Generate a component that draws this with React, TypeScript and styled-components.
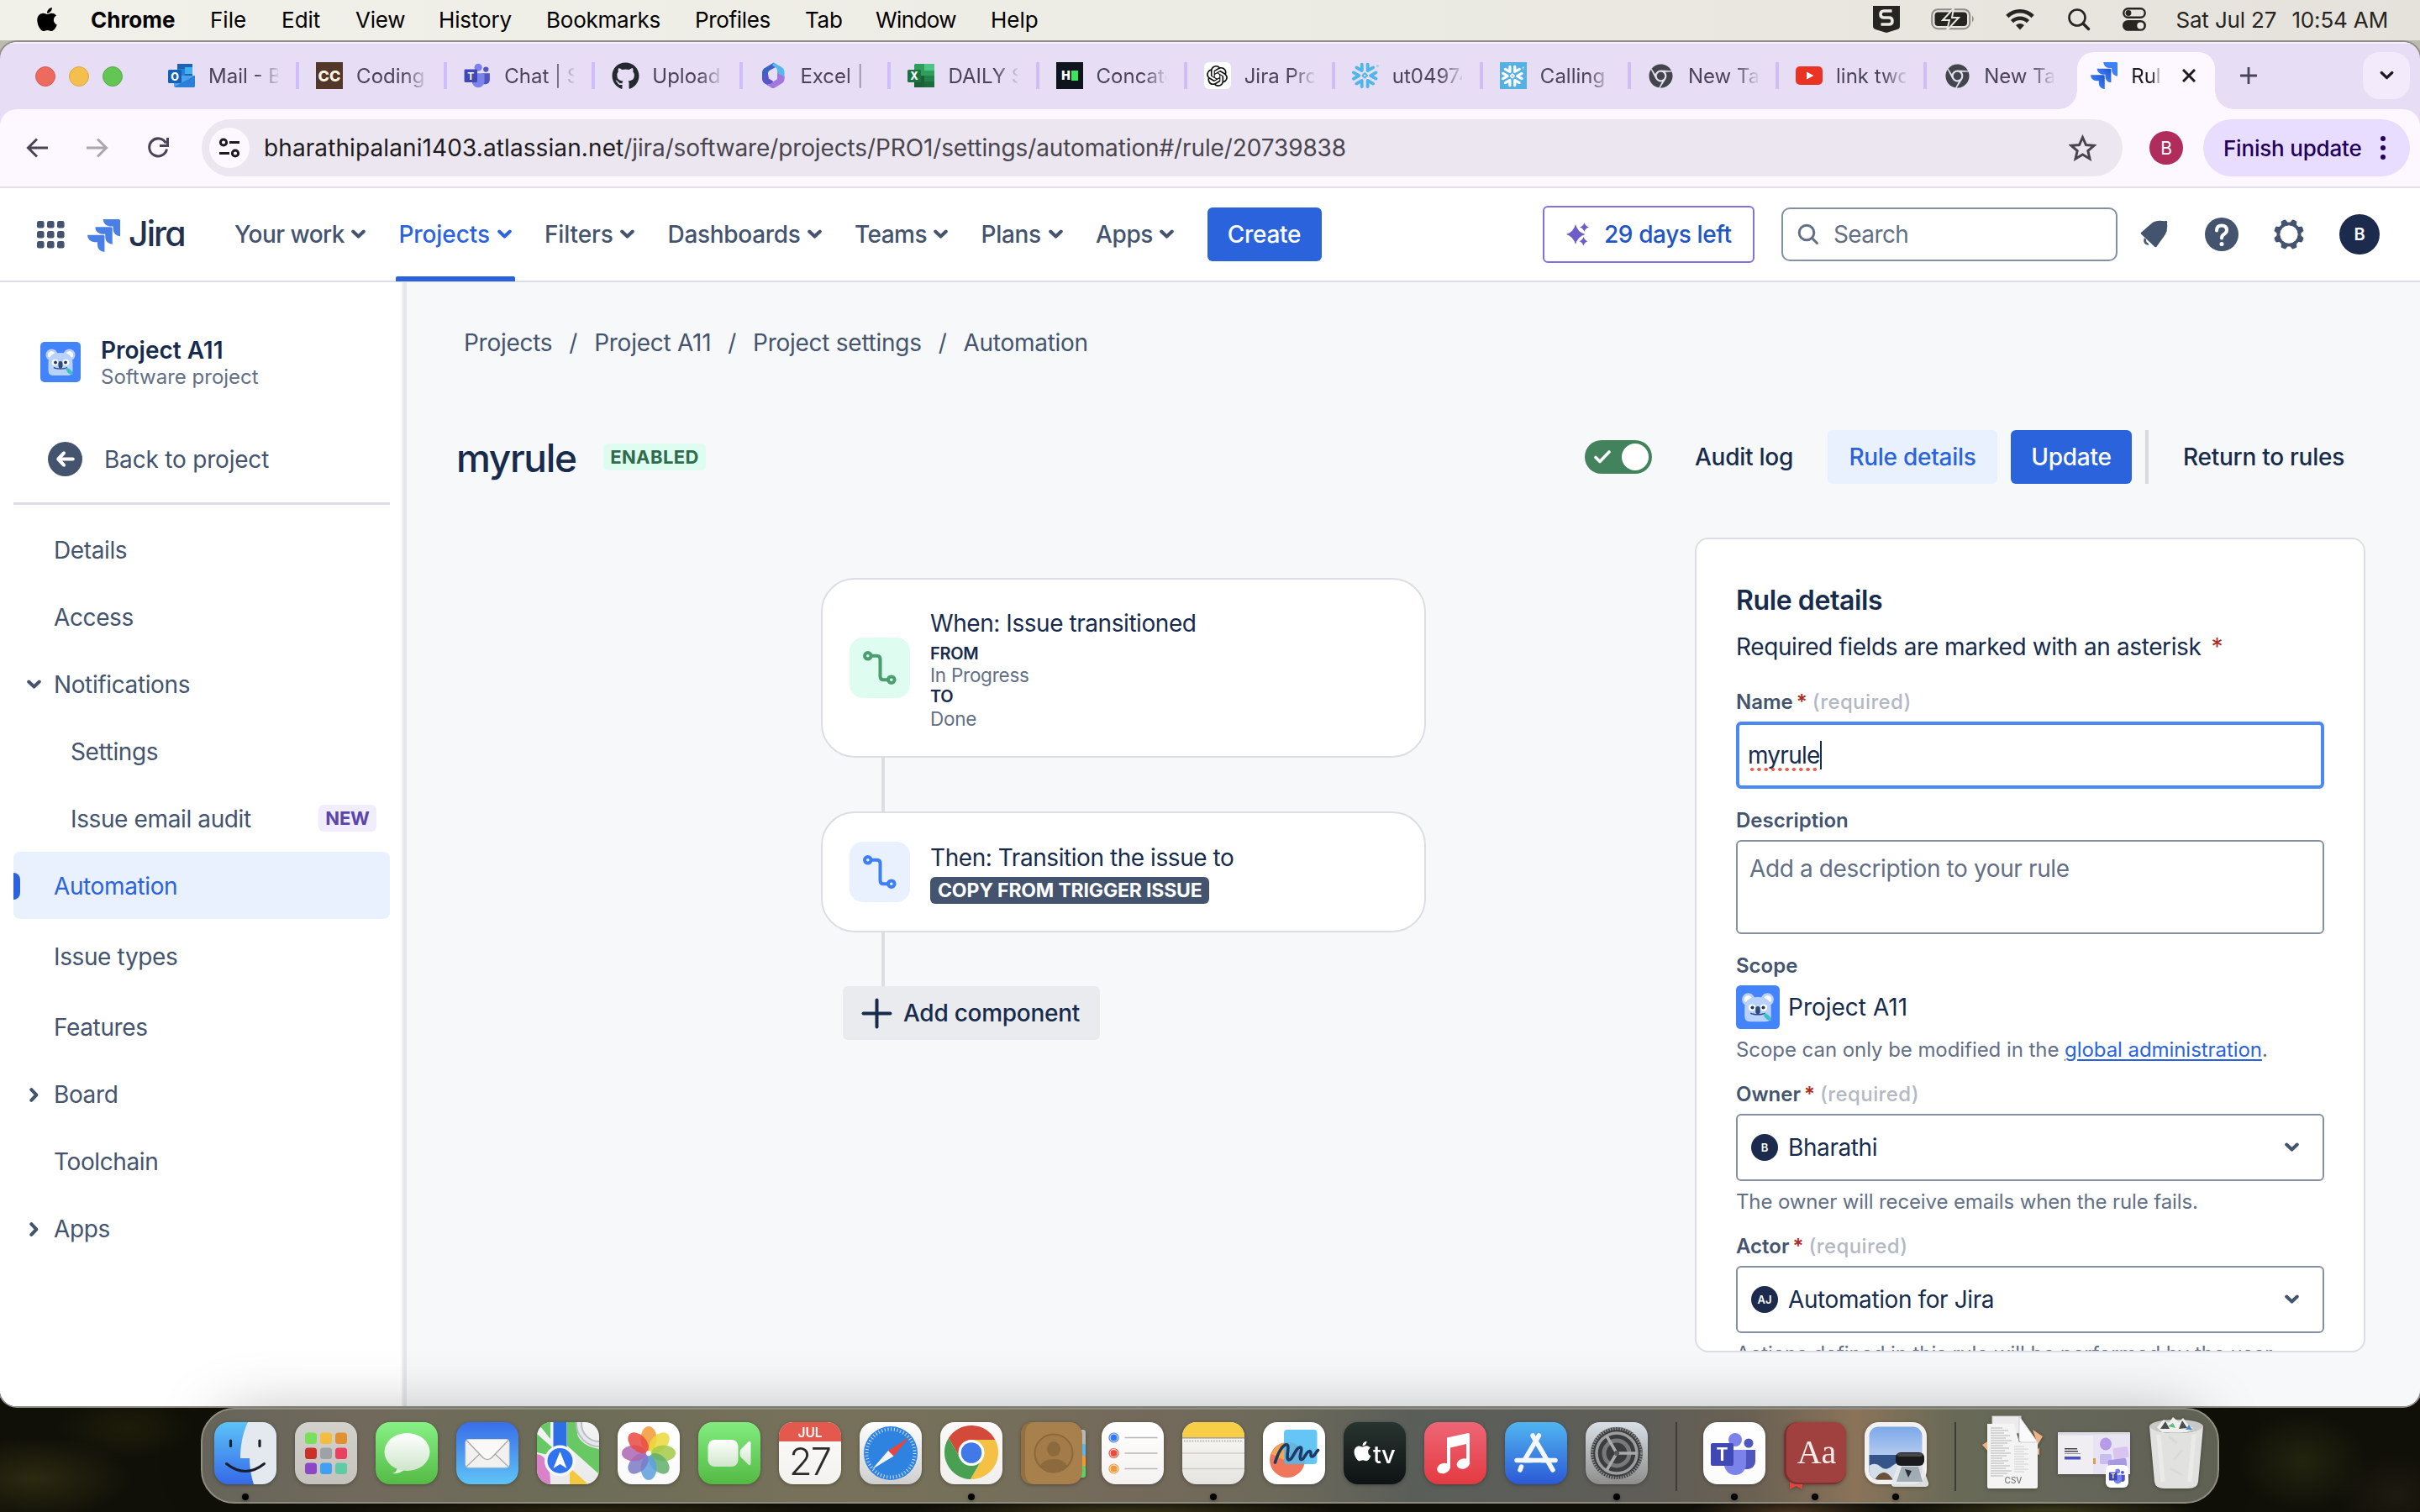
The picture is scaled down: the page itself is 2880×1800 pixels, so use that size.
import React from "react";
import styled, { createGlobalStyle, css } from "styled-components";
import { FaApple, FaChrome, FaGithub } from "react-icons/fa";
import { SiOpenai, SiSnowflake } from "react-icons/si";

const Global = createGlobalStyle`
  *, *::before, *::after { box-sizing: border-box; }
  body { margin: 0; width: 2880px; height: 1800px; overflow: hidden; }
  svg { display: block; flex: none; }
  body, input, button { font-family: Inter, "Liberation Sans", sans-serif; }
`;

const ink = "#172b4d";
const subtle = "#44546f";
const muted = "#626f86";
const blue = "#2a63dc";
const line = "#dcdee4";

/* ---------- desktop and menu bar ---------- */

const Desktop = styled.div`
  display: flex;
  flex-direction: column;
  width: 2880px;
  height: 1800px;
  overflow: hidden;
  background:
    radial-gradient(ellipse 120px 50px at 40px 1760px, #2c2a10 0%, transparent 100%),
    radial-gradient(ellipse 90px 40px at 150px 1700px, #1d1c09 0%, transparent 100%),
    radial-gradient(ellipse 300px 12px at 700px 1798px, #2a240f 0%, transparent 100%),
    radial-gradient(ellipse 260px 16px at 1340px 1800px, #3a3416 0%, transparent 100%),
    radial-gradient(ellipse 120px 20px at 2130px 1800px, #4a3520 0%, transparent 100%),
    radial-gradient(ellipse 180px 14px at 2440px 1798px, #3c3a18 0%, transparent 100%),
    radial-gradient(ellipse 80px 60px at 2740px 1740px, #22240f 0%, transparent 100%),
    radial-gradient(ellipse 70px 50px at 2850px 1780px, #1d1b10 0%, transparent 100%),
    linear-gradient(#bdbbae 0, #bdbbae 800px, #100f08 801px, #100f08 100%);
`;

const MenuBar = styled.header`
  display: flex;
  align-items: center;
  flex: none;
  height: 48px;
  padding: 0 38px 2px 40px;
  background: linear-gradient(90deg, #f1f0e9, #ecebe4 50%, #e4e2db);
  color: #000;
  font-size: 26px;
`;

const MenuItem = styled.span<{ $w: number; $ls?: number; $bold?: boolean }>`
  width: ${(p) => p.$w}px;
  margin-right: 42px;
  white-space: nowrap;
  letter-spacing: ${(p) => p.$ls ?? 0}px;
  font-weight: ${(p) => (p.$bold ? 700 : 400)};
`;

const AppleSlot = styled.span`
  display: flex;
  width: 68px;
`;

const StatusArea = styled.div`
  display: flex;
  align-items: center;
  margin-left: auto;
  color: #262522;
`;

const StatusSlot = styled.span<{ $w: number }>`
  display: flex;
  width: ${(p) => p.$w}px;
`;

const Clock = styled.span`
  display: flex;
  gap: 18px;
  white-space: pre;
  letter-spacing: -0.15px;
`;

/* ---------- browser window ---------- */

const BrowserWindow = styled.div`
  display: flex;
  flex-direction: column;
  flex: none;
  height: 1624px;
  margin-top: 2px;
  border-radius: 20px;
  overflow: hidden;
  background: #e7def6;
  box-shadow: 0 0 0 2px #8f8d86;
`;

const TabStrip = styled.div`
  display: flex;
  align-items: center;
  flex: none;
  height: 80px;
  box-shadow: inset 0 2px 0 #f4effb;
`;

const Lights = styled.div`
  display: flex;
  gap: 16px;
  width: 180px;
  padding: 2px 0 0 42px;
`;

const Light = styled.span<{ $c: string; $edge: string }>`
  width: 24px;
  height: 24px;
  border-radius: 50%;
  background: ${(p) => p.$c};
  border: 1px solid ${(p) => p.$edge};
`;

const Tab = styled.div`
  display: flex;
  align-items: center;
  gap: 16px;
  flex: none;
  width: 176.1px;
  height: 32px;
  padding-left: 20px;
  border-right: 4px solid #cfbcf8;
  color: #4a4458;
  font-size: 24px;
  &:nth-child(14) { border-right-color: transparent; }
`;

const TabTitle = styled.span<{ $w?: number }>`
  width: ${(p) => p.$w ?? 83}px;
  overflow: hidden;
  white-space: nowrap;
  mask-image: linear-gradient(90deg, #000 68%, transparent 104%);
`;

const FavSlot = styled.span`
  display: flex;
  align-items: center;
  justify-content: center;
  flex: none;
  width: 32px;
  height: 32px;
`;

const ActiveTab = styled.div`
  position: relative;
  display: flex;
  align-items: center;
  gap: 16px;
  align-self: flex-end;
  width: 164px;
  height: 68px;
  margin-left: 3px;
  padding: 0 0 12px 16px;
  border-radius: 20px 20px 0 0;
  background: #fdf7ff;
  color: #1d1b20;
  font-size: 24px;
  &::before, &::after {
    content: "";
    position: absolute;
    bottom: 0;
    width: 22px;
    height: 22px;
  }
  &::before { left: -22px; background: radial-gradient(circle at 0 0, transparent 21.5px, #fdf7ff 22px); }
  &::after { right: -22px; background: radial-gradient(circle at 100% 0, transparent 21.5px, #fdf7ff 22px); }
`;

const CloseSlot = styled.span`
  display: flex;
  margin-left: 9px;
`;

const NewTab = styled.span`
  display: flex;
  margin-left: 30px;
`;

const TabSearch = styled.span`
  display: flex;
  align-items: center;
  justify-content: center;
  width: 56px;
  height: 56px;
  margin: 0 12px 0 auto;
  border-radius: 20px;
  background: #f3ebfc;
`;

const AddressBar = styled.div`
  display: flex;
  align-items: center;
  flex: none;
  height: 94px;
  padding-left: 16px;
  border-bottom: 2px solid #e3dfea;
  border-radius: 20px 20px 0 0;
  background: #fdf7ff;
`;

const NavButton = styled.span`
  display: flex;
  align-items: center;
  justify-content: center;
  width: 56px;
  margin-right: 16px;
`;

const Omnibox = styled.div`
  display: flex;
  align-items: center;
  width: 2286px;
  height: 68px;
  margin-left: 8px;
  padding: 0 31px 0 9px;
  border-radius: 34px;
  background: #ece6f0;
  font-size: 28px;
  color: #49454f;
`;

const SiteInfo = styled.span`
  display: flex;
  align-items: center;
  justify-content: center;
  width: 48px;
  height: 48px;
  margin-right: 17px;
  border-radius: 50%;
  background: #fdf7ff;
`;

const UrlHost = styled.span`
  color: #1d1b20;
  letter-spacing: 0.1px;
`;

const UrlPath = styled.span`
  flex: 1;
  letter-spacing: -0.12px;
`;

const Avatar = styled.span<{ $size: number; $font: number; $bg?: string; $weight?: number }>`
  display: flex;
  flex: none;
  align-items: center;
  justify-content: center;
  width: ${(p) => p.$size}px;
  height: ${(p) => p.$size}px;
  border-radius: 50%;
  background: ${(p) => p.$bg ?? "#1c2b4d"};
  color: #fff;
  font-size: ${(p) => p.$font}px;
  font-weight: ${(p) => p.$weight ?? 600};
`;

const ProfileSlot = styled.span`
  display: flex;
  margin: 0 24px 0 32px;
`;

const UpdatePill = styled.span`
  display: flex;
  align-items: center;
  width: 246px;
  height: 68px;
  padding-left: 24px;
  gap: 22px;
  border-radius: 34px;
  background: #e8ddff;
  color: #22005d;
  font-size: 26px;
  font-weight: 500;
  letter-spacing: -0.2px;
  white-space: nowrap;
`;

/* ---------- Jira header ---------- */

const JiraHeader = styled.nav`
  display: flex;
  align-items: center;
  flex: none;
  height: 112px;
  padding: 0 48px 0 44px;
  border-bottom: 2px solid ${line};
  background: #fff;
  font-size: 28px;
  font-weight: 500;
  color: ${subtle};
`;

const Brand = styled.div`
  display: flex;
  align-items: center;
  gap: 10px;
  width: 175px;
  margin: 2px 0 0 27px;
`;

const BrandName = styled.span`
  margin-top: -4px;
  color: #22314f;
  font-size: 41px;
  font-weight: 500;
  letter-spacing: -1.9px;
  font-feature-settings: "cv11";
`;

const NavItem = styled.span<{ $on?: boolean }>`
  position: relative;
  display: flex;
  align-items: center;
  gap: 9px;
  height: 110px;
  margin-right: 39.5px;
  color: ${(p) => (p.$on ? blue : subtle)};
  ${(p) =>
    p.$on &&
    css`
      &::after {
        content: "";
        position: absolute;
        left: -4px;
        right: -4px;
        bottom: -1px;
        height: 6px;
        border-radius: 2px 2px 0 0;
        background: ${blue};
      }
    `}
`;

const NavLabel = styled.span<{ $w: number; $ls: number }>`
  width: ${(p) => p.$w}px;
  white-space: nowrap;
  letter-spacing: ${(p) => p.$ls}px;
`;

const Button = styled.span<{ $w: number; $kind?: "primary" | "selected" | "plain" }>`
  display: flex;
  align-items: center;
  justify-content: center;
  width: ${(p) => p.$w}px;
  height: 64px;
  border-radius: 6px;
  font-size: 28px;
  font-weight: 500;
  letter-spacing: -0.27px;
  white-space: nowrap;
  background: ${(p) => (p.$kind === "primary" ? blue : p.$kind === "selected" ? "#e9f1fe" : "transparent")};
  color: ${(p) => (p.$kind === "primary" ? "#fff" : p.$kind === "selected" ? blue : ink)};
`;

const TrialButton = styled.span`
  display: flex;
  align-items: center;
  gap: 17px;
  width: 252px;
  height: 68px;
  margin: 0 32px 0 auto;
  padding-left: 26px;
  border: 2px solid #8270db;
  border-radius: 6px;
  color: #1f55c4;
  letter-spacing: -0.4px;
  white-space: nowrap;
`;

const SearchBox = styled.span`
  display: flex;
  align-items: center;
  gap: 17px;
  width: 400px;
  height: 64px;
  margin-right: 4px;
  padding-left: 17px;
  border: 2px solid #8590a2;
  border-radius: 10px;
  color: ${muted};
  font-weight: 400;
  letter-spacing: -0.6px;
`;

const HeaderIcon = styled.span`
  display: flex;
  align-items: center;
  justify-content: center;
  width: 80px;
`;

const AccountSlot = styled.span`
  display: flex;
  margin-left: 20px;
`;

/* ---------- sidebar ---------- */

const Body = styled.div`
  display: flex;
  flex: 1;
  min-height: 0;
  background: #f7f8fa;
`;

const Sidebar = styled.aside`
  display: flex;
  flex-direction: column;
  flex: none;
  width: 484px;
  padding: 71px 16px 0 16px;
  border-right: 4px solid #e4e6ea;
  box-shadow: inset -2px 0 0 #f0f0f3;
  background: #fff;
`;

const ProjectHead = styled.div`
  display: flex;
  gap: 24px;
  height: 48px;
  padding-left: 32px;
`;

const ProjectNames = styled.div`
  display: flex;
  flex-direction: column;
  margin-top: -10px;
`;

const ProjectName = styled.span`
  color: ${ink};
  font-size: 28px;
  font-weight: 600;
  line-height: 40px;
  white-space: nowrap;
`;

const ProjectKind = styled.span`
  color: ${muted};
  font-size: 24px;
  line-height: 24px;
`;

const BackLink = styled.div`
  display: flex;
  align-items: center;
  gap: 26px;
  height: 106px;
  margin-top: 40px;
  padding-left: 41px;
  border-bottom: 3px solid ${line};
  color: ${subtle};
  font-size: 28px;
  letter-spacing: -0.2px;
`;

const SideList = styled.div`
  display: flex;
  flex-direction: column;
  padding-top: 13px;
`;

const SideItem = styled.div<{ $on?: boolean; $top?: number }>`
  display: flex;
  align-items: center;
  height: 80px;
  margin-top: ${(p) => p.$top ?? 0}px;
  padding: 2px 16px 0 0;
  border-radius: 8px;
  background: ${(p) => (p.$on ? "#e9f1fe" : "transparent")};
  color: ${(p) => (p.$on ? blue : subtle)};
  font-size: 28px;
  letter-spacing: -0.38px;
`;

const SideLead = styled.span<{ $w: number }>`
  display: flex;
  align-items: center;
  width: ${(p) => p.$w}px;
`;

const ActiveMark = styled.span`
  width: 8px;
  height: 32px;
  border-radius: 0 8px 8px 0;
  background: ${blue};
`;

const ChevronSlot = styled.span`
  display: flex;
  justify-content: center;
  width: 48px;
`;

const NewBadge = styled.span`
  display: flex;
  align-items: center;
  justify-content: center;
  width: 69px;
  height: 32px;
  margin: -2px 0 0 auto;
  border-radius: 6px;
  background: #f1edff;
  color: #5a45ab;
  font-size: 22px;
  font-weight: 700;
  letter-spacing: -0.2px;
`;

/* ---------- main area ---------- */

const Main = styled.main`
  display: flex;
  flex-direction: column;
  flex: 1;
  min-width: 0;
  padding: 52px 65px 0 59px;
`;

const Crumbs = styled.div`
  display: flex;
  align-items: center;
  gap: 20px;
  height: 40px;
  padding-left: 9px;
  color: ${subtle};
  font-size: 28px;
  letter-spacing: -0.27px;
  white-space: nowrap;
`;

const TitleRow = styled.div`
  display: flex;
  align-items: center;
  height: 64px;
  margin-top: 84px;
`;

const Title = styled.h1`
  width: 175px;
  margin: 2px 0 0;
  color: ${ink};
  font-size: 46px;
  font-weight: 500;
  letter-spacing: -1.35px;
`;

const Enabled = styled.span`
  display: flex;
  align-items: center;
  justify-content: center;
  width: 122px;
  height: 32px;
  border-radius: 6px;
  background: #dffcf0;
  color: #2f6b4c;
  font-size: 22px;
  font-weight: 700;
  letter-spacing: 0.4px;
`;

const Toggle = styled.span`
  display: flex;
  align-items: center;
  justify-content: space-between;
  width: 80px;
  height: 40px;
  margin: 0 26px 0 auto;
  padding: 0 4px 0 11px;
  border-radius: 20px;
  background: #42825c;
`;

const Knob = styled.span`
  width: 32px;
  height: 32px;
  border-radius: 50%;
  background: #fff;
`;

const Actions = styled.div`
  display: flex;
  align-items: center;
  gap: 16px;
`;

const Divider = styled.span`
  width: 4px;
  height: 64px;
  background: #d8dae0;
`;

const Workspace = styled.div`
  display: flex;
  justify-content: space-between;
  margin-top: 64px;
`;

const Flow = styled.div`
  display: flex;
  flex-direction: column;
  align-items: flex-start;
  width: 1155px;
  padding: 48px 0 0 434px;
`;

const RuleCard = styled.div<{ $h: number }>`
  display: flex;
  align-items: center;
  gap: 24px;
  width: 720px;
  height: ${(p) => p.$h}px;
  padding-left: 32px;
  border: 2px solid ${line};
  border-radius: 40px;
  background: #fff;
`;

const StepIcon = styled.span<{ $bg: string }>`
  display: flex;
  width: 72px;
  height: 72px;
  border-radius: 16px;
  background: ${(p) => p.$bg};
`;

const StepText = styled.div`
  display: flex;
  flex-direction: column;
  align-items: flex-start;
  padding-top: 2px;
`;

const StepTitle = styled.span`
  margin-bottom: 6px;
  color: ${ink};
  font-size: 28px;
  line-height: 36px;
  letter-spacing: -0.44px;
`;

const StepKey = styled.span`
  color: ${ink};
  font-size: 20px;
  font-weight: 600;
  line-height: 25.6px;
  letter-spacing: -0.3px;
`;

const StepValue = styled.span`
  color: ${muted};
  font-size: 22.5px;
  line-height: 25.6px;
  letter-spacing: -0.25px;
`;

const DarkTag = styled.span`
  display: flex;
  align-items: center;
  height: 32px;
  margin-top: -1px;
  padding: 0 8px 0 9px;
  border-radius: 6px;
  background: ${subtle};
  color: #fff;
  font-size: 23px;
  font-weight: 700;
  letter-spacing: -0.17px;
`;

const Connector = styled.span`
  width: 4px;
  height: 64px;
  margin-left: 72px;
  background: ${line};
`;

const AddButton = styled.span`
  display: flex;
  align-items: center;
  gap: 13px;
  width: 306px;
  height: 64px;
  margin-left: 26px;
  padding-left: 22px;
  border-radius: 6px;
  background: #e9ebee;
  color: ${ink};
  font-size: 28px;
  font-weight: 500;
  letter-spacing: -0.27px;
`;

/* ---------- details panel ---------- */

const Panel = styled.section`
  display: flex;
  flex-direction: column;
  width: 798px;
  height: 970px;
  padding: 53px 47px 0;
  border: 2px solid ${line};
  border-radius: 16px;
  background: #fff;
  overflow: hidden;
`;

const PanelTitle = styled.h2`
  flex: none;
  margin: 0;
  color: ${ink};
  font-size: 32px;
  font-weight: 600;
  line-height: 40px;
  letter-spacing: -0.4px;
`;

const PanelNote = styled.p`
  flex: none;
  margin: 15px 0 8px;
  color: ${ink};
  font-size: 28px;
  line-height: 40px;
  letter-spacing: -0.39px;
`;

const Star = styled.span`
  margin-left: 12px;
  color: #ae2e24;
`;

const FieldLabel = styled.div`
  display: flex;
  align-items: center;
  flex: none;
  height: 32px;
  margin: 21px 0 8px;
  color: ${subtle};
  font-size: 24px;
  font-weight: 600;
`;

const LabelStar = styled.span`
  margin: 0 6px 0 4px;
  color: #ae2e24;
`;

const RequiredHint = styled.span`
  color: #b3b9c4;
  font-weight: 500;
  letter-spacing: 0.4px;
`;

const NameInput = styled.div`
  display: flex;
  align-items: center;
  flex: none;
  height: 80px;
  padding-left: 10px;
  border: 4px solid #4c88f5;
  border-radius: 6px;
  color: ${ink};
  font-size: 28px;
`;

const Misspelt = styled.span`
  position: relative;
  letter-spacing: -0.75px;
  line-height: 36px;
  &::after {
    content: "";
    position: absolute;
    left: 1px;
    right: 0;
    bottom: -1px;
    height: 4px;
    background: radial-gradient(circle, #ee5f52 1.9px, transparent 2.2px) 0 0 / 8.3px 4px repeat-x;
  }
`;

const Caret = styled.span`
  width: 2px;
  height: 34px;
  background: ${ink};
`;

const TextArea = styled.div`
  flex: none;
  height: 112px;
  padding: 14px 14px;
  border: 2px solid #8590a2;
  border-radius: 6px;
  color: ${muted};
  font-size: 28px;
  line-height: 36px;
  letter-spacing: -0.38px;
`;

const ScopeRow = styled.div`
  display: flex;
  align-items: center;
  gap: 10px;
  flex: none;
  height: 52px;
  color: ${ink};
  font-size: 28px;
`;

const Helper = styled.p<{ $ls?: number }>`
  flex: none;
  margin: 11px 0 1px;
  color: ${muted};
  font-size: 24px;
  line-height: 28px;
  letter-spacing: ${(p) => p.$ls ?? -0.06}px;
  white-space: nowrap;
`;

const Link = styled.a`
  color: ${blue};
  text-decoration: underline;
  text-underline-offset: 3px;
  text-decoration-thickness: 2px;
`;

const Select = styled.div`
  display: flex;
  align-items: center;
  flex: none;
  height: 80px;
  padding: 0 28px 0 16px;
  border: 2px solid #8590a2;
  border-radius: 6px;
`;

const SelectValue = styled.span`
  flex: 1;
  margin-left: 12px;
  color: ${ink};
  font-size: 28px;
  letter-spacing: -0.4px;
`;

/* ---------- dock ---------- */

const DockArea = styled.div`
  position: relative;
  display: flex;
  justify-content: center;
  flex: none;
  padding-top: 2px;
`;

const Dock = styled.div`
  display: flex;
  gap: 22px;
  width: 2402px;
  height: 114px;
  padding: 15px 0 0 14px;
  border: 2px solid #8f8d80;
  border-radius: 40px;
  background: linear-gradient(
    90deg,
    #66645a 0%, #716a5c 8%, #6c6c57 18%, #77715a 30%, #75705a 38%, #74695b 46%,
    #6d6a5a 53%, #5a5e59 60%, #5f5d57 72%, #6b6153 77%, #8a7359 82%, #686a57 87%, #65665a 93%, #5f6153 100%
  );
  box-shadow: 0 -10px 80px -30px rgba(0, 0, 0, 0.42);
`;

const DockItem = styled.div<{ $running?: boolean; $w?: number; $shift?: number }>`
  position: relative;
  flex: none;
  width: ${(p) => p.$w ?? 74}px;
  height: 74px;
  margin-left: ${(p) => p.$shift ?? 0}px;
  filter: drop-shadow(0 1px 2px rgba(0, 0, 0, 0.3));
  svg { overflow: visible; }
  ${(p) =>
    p.$running &&
    css`
      &::after {
        content: "";
        position: absolute;
        left: 33px;
        bottom: -19px;
        width: 8px;
        height: 8px;
        border-radius: 50%;
        background: #000;
      }
    `}
`;

const DockRule = styled.span`
  flex: none;
  width: 2px;
  height: 82px;
  margin: 0 9px 0 11px;
  background: #3d3d36;
`;

/* ---------- small drawings ---------- */

const JIRA = [
  "M11.571 11.513H0a5.218 5.218 0 0 0 5.232 5.215h2.13v2.057A5.215 5.215 0 0 0 12.575 24V12.518a1.005 1.005 0 0 0-1.005-1.005z",
  "M17.294 5.757H5.736a5.215 5.215 0 0 0 5.215 5.214h2.129v2.058a5.218 5.218 0 0 0 5.215 5.214V6.758a1.001 1.001 0 0 0-1.001-1.001z",
  "M23.013 0H11.455a5.215 5.215 0 0 0 5.215 5.215h2.129v2.057A5.215 5.215 0 0 0 24 12.483V1.005A1.001 1.001 0 0 0 23.013 0Z",
];

const JiraMark = ({ size, shaded }: { size: number; shaded?: boolean }) => (
  <svg width={size} height={size} viewBox="0 0 24 24">
    <defs>
      <linearGradient id="jm" x1="1" y1="0" x2="0.3" y2="0.7">
        <stop offset="0.1" stopColor="#1f5bd0" />
        <stop offset="1" stopColor="#3f80f7" />
      </linearGradient>
    </defs>
    {JIRA.map((d, i) => (
      <path key={i} d={d} fill={shaded && i < 2 ? "url(#jm)" : shaded ? "#3f80f7" : "#4a7fe8"} />
    ))}
  </svg>
);

const Chevron = ({ dir = "down", color = subtle, w = 17, stroke = 4 }: { dir?: string; color?: string; w?: number; stroke?: number }) =>
  dir === "down" ? (
    <svg width={w} height={w * 0.65} viewBox="0 0 17 11" fill="none" stroke={color} strokeWidth={stroke} strokeLinecap="round" strokeLinejoin="round">
      <path d="M2.2 2.5l6.3 6 6.3-6" />
    </svg>
  ) : (
    <svg width="11" height="17" viewBox="0 0 11 17" fill="none" stroke={color} strokeWidth={stroke} strokeLinecap="round" strokeLinejoin="round">
      <path d="M2.3 2.2l6 6.3-6 6.3" />
    </svg>
  );

const Koala = ({ size }: { size: number }) => (
  <svg width={size} height={size} viewBox="0 0 48 48">
    <rect width="48" height="48" rx="5" fill="#4484fa" />
    <circle cx="13.5" cy="15.5" r="7" fill="#b9d2fc" />
    <circle cx="34.5" cy="15.5" r="7" fill="#b9d2fc" />
    <circle cx="13.3" cy="15.5" r="4.3" fill="#fff" />
    <circle cx="34.7" cy="15.5" r="4.3" fill="#fff" />
    <path d="M16 14q8-2 16 0q7 3 6.500 12V34q0 6-6 6H15.500q-6 0-6-6V26q-.5-9 6.500-12z" fill="#b9d2fc" />
    <circle cx="17.500" cy="24.500" r="3.800" fill="#fff" />
    <circle cx="30.500" cy="24.500" r="3.800" fill="#fff" />
    <circle cx="18" cy="24.500" r="1.900" fill="#253858" />
    <circle cx="30" cy="24.500" r="1.900" fill="#253858" />
    <rect x="21.500" y="23" width="5" height="8.500" rx="2.400" fill="#2b4a80" />
    <path d="M16 30.500q2 1.500 8 1.500t8-1.500" stroke="#2b4a80" strokeWidth="1.400" fill="none" />
    <path d="M30 31c5 0 8 3 9 8-5 0-8-3-9-8z" fill="#3cc0c8" />
  </svg>
);

const Transition = ({ color }: { color: string }) => (
  <svg width="72" height="72" viewBox="0 0 72 72" fill="none" stroke={color} strokeWidth="4">
    <circle cx="21.800" cy="21.800" r="3.800" />
    <circle cx="49.800" cy="50.200" r="3.800" />
    <path d="M26 21.800h6.500q4 0 4 4v20.400q0 4 4 4h5" />
  </svg>
);

const TeamsGlyph = ({ size }: { size: number }) => (
  <svg width={size} height={size} viewBox="0 0 56 52">
    <circle cx="46" cy="13" r="5.500" fill="#4f56bd" />
    <path d="M38 21h16v14a9 9 0 0 1-9 9h-7z" fill="#4f56bd" />
    <circle cx="30" cy="9" r="8" fill="#7b83eb" />
    <path d="M17 21h26v17a13 13 0 0 1-26 0z" fill="#7b83eb" />
    <rect x="1" y="13" width="27" height="27" rx="2" fill="#4048b5" />
    <text x="14.500" y="34" textAnchor="middle" fontFamily="Inter, sans-serif" fontSize="21" fontWeight="700" fill="#fff">T</text>
  </svg>
);

const FavTile = styled.span<{ $bg?: string }>`
  display: flex;
  align-items: center;
  justify-content: center;
  flex: none;
  width: 32px;
  height: 32px;
  border-radius: ${(p) => (p.$bg ? 0 : 6)}px;
  background: ${(p) => p.$bg ?? "#fff"};
`;

const Favicon = ({ kind }: { kind: string }) => {
  switch (kind) {
    case "outlook":
      return (
        <svg width="32" height="32" viewBox="0 0 32 32">
          <rect x="11" y="2" width="18" height="14" fill="#1f63b5" />
          <rect x="20" y="6" width="9" height="8" fill="#41b0f0" />
          <rect x="11" y="8" width="9" height="8" fill="#2382d6" />
          <path d="M7 16l25 0v12q0 2-2 2H9q-2 0-2-2z" fill="#4aa3ea" />
          <path d="M8 29L32 16v12q0 2-2 2H9z" fill="#2c7fd6" />
          <rect x="0" y="9" width="16" height="16" rx="1.500" fill="#1560b8" />
          <text x="8" y="21.500" textAnchor="middle" fontFamily="Inter, sans-serif" fontSize="12.500" fontWeight="800" fill="#fff">O</text>
        </svg>
      );
    case "cc":
      return (
        <svg width="32" height="32" viewBox="0 0 32 32">
          <rect width="32" height="32" fill="#533728" />
          <text x="16" y="22.500" textAnchor="middle" fontFamily="Inter, sans-serif" fontSize="18" fontWeight="800" fill="#fff8e7">CC</text>
        </svg>
      );
    case "teams":
      return <TeamsGlyph size={32} />;
    case "github":
      return <FaGithub size={33} color="#24292f" />;
    case "m365":
      return (
        <svg width="32" height="32" viewBox="0 0 32 32">
          <path d="M17 0.500L6 7Q3 9 3 12.500v7q0 4 3.500 6l3.500 2V13.500q0-2.500 2-3.700L21 5z" fill="#3c62c4" />
          <path d="M17 .5l9 5.200q3.500 2 3.500 6V20l-8.500-4.500V10q0-2.500-2.500-4L15 4z" fill="#58b7ee" />
          <path d="M29.500 17v3q0 3.500-3 5.200L18 30.500q-2 1.200-4 0L7 26q6 2 9-2.500l5-3.500V13z" fill="#a277dd" />
          <path d="M3 18q0 5 3.500 7.500 6 3 10-2.500L11 19.500 10 14z" fill="#5b55c9" />
          <path d="M12.500 12.500l3.800-2.300 3.700 2.300v7l-3.700 2.300-3.800-2.300z" fill="#e7def6" />
        </svg>
      );
    case "excel":
      return (
        <svg width="32" height="32" viewBox="0 0 32 32">
          <rect x="8" y="2" width="24" height="28" rx="1.500" fill="#2e9e5b" />
          <rect x="20" y="2" width="12" height="8" fill="#4fc486" />
          <rect x="8" y="16" width="12" height="14" fill="#1d5f38" />
          <rect x="20" y="16" width="12" height="7" fill="#23814b" />
          <rect x="20" y="23" width="12" height="7" fill="#1f6b3e" />
          <rect x="0" y="9" width="16" height="15" rx="1.500" fill="#1b7340" />
          <text x="8" y="21" textAnchor="middle" fontFamily="Inter, sans-serif" fontSize="12.500" fontWeight="800" fill="#fff">X</text>
        </svg>
      );
    case "hr":
      return (
        <svg width="32" height="32" viewBox="0 0 32 32">
          <rect width="32" height="32" fill="#0e141e" />
          <text x="11.500" y="21" textAnchor="middle" fontFamily="Inter, sans-serif" fontSize="14" fontWeight="900" fill="#fff">H</text>
          <rect x="18" y="10" width="8" height="12" fill="#39e75f" />
        </svg>
      );
    case "openai":
      return (
        <FavTile>
          <SiOpenai size={25} color="#111" />
        </FavTile>
      );
    case "snow":
      return <SiSnowflake size={32} color="#4fb6e8" />;
    case "snowtile":
      return (
        <FavTile $bg="#55b1e4">
          <SiSnowflake size={27} color="#fff" />
        </FavTile>
      );
    case "youtube":
      return (
        <svg width="32" height="32" viewBox="0 0 32 32">
          <rect y="5" width="32" height="22" rx="5" fill="#ea3323" />
          <path d="M13 11.500l8.500 4.500-8.500 4.500z" fill="#fff" />
        </svg>
      );
    default:
      return <FaChrome size={29} color="#42464a" />;
  }
};

/* ---------- dock drawings ---------- */

const Tile = ({ id, from, to, children }: { id: string; from: string; to: string; children?: React.ReactNode }) => (
  <svg width="74" height="74" viewBox="0 0 74 74">
    <defs>
      <linearGradient id={`g-${id}`} x1="0" y1="0" x2="0" y2="1">
        <stop offset="0" stopColor={from} />
        <stop offset="1" stopColor={to} />
      </linearGradient>
      <clipPath id={`c-${id}`}>
        <rect width="74" height="74" rx="17" />
      </clipPath>
      <linearGradient id={`w-${id}`} x1="0" y1="0" x2="0" y2="1">
        <stop offset="0" stopColor="#ffffff" />
        <stop offset="1" stopColor="#cfe6cb" />
      </linearGradient>
    </defs>
    <rect width="74" height="74" rx="17" fill={`url(#g-${id})`} />
    <g clipPath={`url(#c-${id})`}>{children}</g>
  </svg>
);

const Finder = () => (
  <Tile id="finder" from="#5cc3f8" to="#3569e8">
    <path d="M40 0C33 15 31 30 31 43h11c0 10 2 22 5 31h27V0z" fill="#e4e8ef" />
    <path d="M19.500 22v6.500M54 22v6.500" stroke="#17202c" strokeWidth="3.200" strokeLinecap="round" />
    <path d="M14.500 49.500q22.500 18 45 0" stroke="#17202c" strokeWidth="3" fill="none" strokeLinecap="round" />
  </Tile>
);

const pads = ["#7ae05b", "#f5bd3f", "#e3902f", "#c8322b", "#9da2a6", "#ea4061", "#8c46c6", "#3fa0f6", "#60c9a6"];
const Launchpad = () => (
  <Tile id="pad" from="#d3d1cc" to="#c6c3bd">
    {pads.map((c, i) => (
      <rect key={i} x={12 + (i % 3) * 18} y={12.500 + Math.floor(i / 3) * 18} width="14" height="13.500" rx="3.500" fill={c} />
    ))}
  </Tile>
);

const Messages = () => (
  <Tile id="msg" from="#86f184" to="#55bb46">
    <path d="M20 61q5-1 6-7l8 3q-6 5-14 4z" fill="#dff0dc" />
    <ellipse cx="37.500" cy="35.500" rx="27" ry="22.500" fill="url(#w-msg)" />
  </Tile>
);

const Mail = () => (
  <Tile id="mail" from="#396ee9" to="#5fc3f6">
    <rect x="11" y="20.500" width="52" height="33.500" rx="3.500" fill="#f2f1f0" stroke="#d6d5d3" />
    <path d="M12 53l19-18M62 53L43 35" stroke="#aaa9a7" strokeWidth="1.200" />
    <path d="M12 21.500l20 21q5 4 10 0l20-21" fill="#faf9f8" stroke="#a3a2a0" strokeWidth="1.200" />
  </Tile>
);

const Maps = () => (
  <Tile id="maps" from="#f4f4f4" to="#eaeaea">
    <path d="M36 0h12v14q4 14 26 18v30L36 28z" fill="#68c964" />
    <path d="M0 14l18 16v10L0 36z" fill="#68c964" />
    <path d="M0 0h16v20z" fill="#68c964" />
    <path d="M0 38q16 2 16 36H0z" fill="#d982c9" />
    <path d="M39 54l22 20H39z" fill="#f3c93f" />
    <circle cx="74" cy="2" r="24" fill="none" stroke="#b9bdc3" strokeWidth="8" />
    <circle cx="74" cy="2" r="24" fill="none" stroke="#e6e7ea" strokeWidth="4" />
    <rect x="19.500" width="16" height="50" fill="#2f6fe4" />
    <circle cx="27.500" cy="46" r="18.500" fill="#f5f6f8" />
    <circle cx="27.500" cy="46" r="15" fill="#2f74ee" />
    <path d="M27.500 35l8 20-8-5-8 5z" fill="#fff" />
  </Tile>
);

const petals = ["#f39a35", "#ecd93b", "#a2cb48", "#62b06c", "#5c9fdf", "#7c7ac6", "#ae66b2", "#ea4b42"];
const Photos = () => (
  <Tile id="photos" from="#ffffff" to="#fafafa">
    {petals.map((c, i) => (
      <ellipse key={i} cx="37" cy="19.500" rx="9.500" ry="14.500" fill={c} opacity="0.86" transform={`rotate(${i * 45} 37 37)`} />
    ))}
  </Tile>
);

const FaceTime = () => (
  <Tile id="ft" from="#82ec80" to="#53ba43">
    <rect x="11.500" y="21" width="36" height="32" rx="8" fill="url(#w-ft)" />
    <path d="M50 33l10-10q2.500-1 2.500 2v24q0 3-2.500 2L50 41q-1-4 0-8z" fill="url(#w-ft)" />
  </Tile>
);

const Calendar = () => (
  <Tile id="cal" from="#fbfbfa" to="#f3f2ef">
    <rect width="74" height="23" fill="#e4594d" />
    <text x="37" y="17.500" textAnchor="middle" fontFamily="Inter, sans-serif" fontSize="15.500" fontWeight="600" fill="#fff">JUL</text>
    <text x="36.500" y="63" textAnchor="middle" fontFamily="Inter, sans-serif" fontSize="45" fontWeight="300" letterSpacing="-2" fill="#2b2b2b">27</text>
  </Tile>
);

const Safari = () => (
  <Tile id="saf" from="#ffffff" to="#cfcfd0">
    <circle cx="37" cy="37" r="32" fill="#2f83e0" />
    <circle cx="37" cy="37" r="28.500" fill="none" stroke="#cfe3fa" strokeWidth="4" strokeDasharray="1 2.730" />
    <path d="M59 18L34 34l3 3 3.500 3.500z" fill="#e8453c" />
    <path d="M15 56l19-22 6.500 6.500z" fill="#f4f4f4" />
  </Tile>
);

const ChromeIcon = () => (
  <Tile id="chr" from="#fbfaf9" to="#f1efed">
    <path d="M65.300 21A32 32 0 0 0 9.850 19L24 43.500 37 36V21z" fill="#d34a3b" />
    <path d="M65.300 21A32 32 0 0 1 35.900 68L50 43.500 37 36V21z" fill="#f4c145" />
    <path d="M35.900 68A32 32 0 0 1 9.850 19L24 43.500 37 36l13 7.500z" fill="#4aa052" />
    <circle cx="37" cy="36.500" r="15.500" fill="#fff" />
    <circle cx="37" cy="36.500" r="12.300" fill="#4179e8" />
  </Tile>
);

const Contacts = () => (
  <svg width="78" height="74" viewBox="0 0 78 74">
    <rect x="66" y="9" width="11" height="20" rx="3" fill="#b8b8b6" />
    <rect x="66" y="26" width="11" height="16" rx="2" fill="#5cb4ef" />
    <rect x="66" y="40" width="11" height="14" rx="2" fill="#f09a36" />
    <rect x="66" y="52" width="11" height="14" rx="3" fill="#5ed164" />
    <rect width="73" height="74" rx="15" fill="#a8804c" />
    <path d="M15 0Q0 0 0 15v44q0 15 15 15Q5 72 5 59V15Q5 2 15 0z" fill="#92703f" />
    <circle cx="39" cy="37" r="22.500" fill="#a37b48" stroke="#8a683b" strokeWidth="2" />
    <ellipse cx="39" cy="32" rx="8" ry="9" fill="#8d6a3d" />
    <path d="M23 52q4-8 16-8t16 8q-7 8-16 8t-16-8z" fill="#8d6a3d" />
  </svg>
);

const Reminders = () => (
  <Tile id="rem" from="#ffffff" to="#f4f2f0">
    {["#3478f6", "#eb4d3d", "#f19a37"].map((c, i) => (
      <g key={c}>
        <circle cx="14.500" cy={18.500 + i * 18.500} r="5.500" fill="none" stroke={c} strokeWidth="1.200" />
        <circle cx="14.500" cy={18.500 + i * 18.500} r="3.900" fill={c} />
        <path d={`M27.500 ${18.500 + i * 18.500}h39`} stroke="#b9b8b8" strokeWidth="1.400" />
      </g>
    ))}
  </Tile>
);

const Notes = () => (
  <Tile id="notes" from="#fbfaf8" to="#e6e4e0">
    <rect width="74" height="18.500" fill="#f7ce46" />
    <rect y="18" width="74" height="1.600" fill="#a8a49a" />
    <path d="M2 22.500h70" stroke="#9c9a95" strokeWidth="1.600" strokeDasharray="1.400 1.800" />
    <path d="M0 37h74M0 55.500h74" stroke="#cfcdca" strokeWidth="1.400" />
  </Tile>
);

const Freeform = () => (
  <Tile id="free" from="#ffffff" to="#ffffff">
    <circle cx="29" cy="45" r="21" fill="#f0775a" />
    <path d="M10 38a21 21 0 0 1 30-11L25 45z" fill="#f6b04b" opacity="0.8" />
    <rect x="25" y="9" width="39.500" height="41" rx="4" fill="#4cbcf2" opacity="0.86" />
    <path d="M14.500 48C18 36 24 26 28.500 27c4 1-2 16 2 18 4.500 1 9-16 14-15 4 1-3 13 1 14.500 3.500 1 6-10 10-10 3 .5 0 6.500 3 6.500s4-5 7-7.500" fill="none" stroke="#1c3a63" strokeWidth="3.600" strokeLinecap="round" />
  </Tile>
);

const TvIcon = () => (
  <Tile id="tv" from="#28342f" to="#0e1214">
    <FaApple x={9} y={21} size={27} color="#fff" />
    <text x="35" y="48.500" fontFamily="Inter, sans-serif" fontSize="29" fontWeight="500" letterSpacing="-0.500" fill="#fff">tv</text>
  </Tile>
);

const Music = () => (
  <Tile id="mus" from="#ee6677" to="#e43a41">
    <path d="M27 18.500L52.500 13q1.500 0 1.500 2v32h-4V26l-19 4.500V54h-4z" fill="#fff" />
    <ellipse cx="23" cy="55" rx="8" ry="6" transform="rotate(-18 23 55)" fill="#fff" />
    <ellipse cx="46.500" cy="49.500" rx="8" ry="6" transform="rotate(-18 46.500 49.500)" fill="#fff" />
  </Tile>
);

const AppStore = () => (
  <Tile id="store" from="#50b5f1" to="#2b59d6">
    <path d="M40.500 16L23 45.500M19.500 53L18 57M33 16l24 41M14 45.500h18M44 45.500h16" stroke="#f4f8fd" strokeWidth="5.500" strokeLinecap="round" />
    <path d="M23 45.500h30" stroke="#f4f8fd" strokeWidth="5.500" />
  </Tile>
);

const SettingsIcon = () => (
  <Tile id="set" from="#d8e0e6" to="#8f8e8c">
    <circle cx="37" cy="37" r="31" fill="#3b3c3d" />
    <circle cx="37" cy="37" r="29.500" fill="none" stroke="#8d8f91" strokeWidth="3.500" strokeDasharray="1.600 1.500" />
    <circle cx="37" cy="37" r="24" fill="none" stroke="#9b9d9e" strokeWidth="3.500" />
    <circle cx="37" cy="37" r="15" fill="none" stroke="#77797a" strokeWidth="5" />
    <path d="M37 37h24M37 37L25 16.500M37 37L25 57.500" stroke="#a8aaab" strokeWidth="3.500" />
    <circle cx="37" cy="37" r="3" fill="#54585a" />
  </Tile>
);

const TeamsIcon = () => (
  <Tile id="teams" from="#ffffff" to="#fbfbfb">
    <g transform="translate(8 10)">
      <TeamsGlyph size={56} />
    </g>
  </Tile>
);

const Dictionary = () => (
  <svg width="74" height="74" viewBox="0 0 74 74">
    <path d="M7 66h15v14l-7.500-4L7 80z" fill="#e0463b" />
    <rect width="74" height="74" rx="16" fill="#7d2f31" />
    <rect x="3" width="71" height="72" rx="14" fill="#a0403f" />
    <text x="39" y="49" textAnchor="middle" fontFamily="Liberation Serif, serif" fontSize="40" fill="#f6ecea">Aa</text>
  </svg>
);

const Preview = () => (
  <svg width="78" height="78" viewBox="0 0 78 78">
    <defs>
      <linearGradient id="pv-sky" x1="0" y1="0" x2="0" y2="1">
        <stop offset="0" stopColor="#7ba8ea" />
        <stop offset="1" stopColor="#b4cbf0" />
      </linearGradient>
      <clipPath id="pv-clip">
        <rect x="5.500" y="5.500" width="63" height="63" rx="11" />
      </clipPath>
    </defs>
    <rect width="74" height="74" rx="17" fill="#f2f1ef" />
    <g clipPath="url(#pv-clip)">
      <rect x="5" y="5" width="64" height="35" fill="url(#pv-sky)" />
      <rect x="5" y="39" width="64" height="30" fill="#35558a" />
      <path d="M5 52q8-5 14 1t14-1 12 2v15H5z" fill="#d3deea" />
      <path d="M12 69q4-8 10-9t12 9z" fill="#6a5138" />
    </g>
    <path d="M40 50h28l8 22q1 5-4 5H36q-5 0-4-5z" fill="#e6e9eb" opacity="0.92" />
    <path d="M44 53h20l5 18H38z" fill="#8f9aa3" opacity="0.75" />
    <path d="M48 56l8 2-4 8z" fill="#2b2e33" />
    <rect x="37" y="36" width="34" height="16" rx="6" fill="#1b1b1d" />
    <rect x="39" y="37" width="30" height="4" rx="2" fill="#47474a" />
  </svg>
);

const CsvFile = () => (
  <svg width="72" height="86" viewBox="0 0 72 86" transform="translate(-6 -7)">
    <path d="M0 34l8-5v14zM60 16l12 8-6 10zM62 44l6-7v9z" fill="#f0b183" />
    <rect x="12" width="34" height="20" fill="#ececec" stroke="#cfcfcf" />
    <path d="M6 9h32l6 22h22v53q0 2-2 2H8q-2 0-2-2z" fill="#f4f4f4" />
    <path d="M44 0L66 31H46q-2 0-2-3z" fill="#fafafa" stroke="#cfcfcf" />
    {Array.from({ length: 20 }, (_, i) => (
      <path key={i} d={`M10 ${14 + i * 3}h${14 + ((i * 7) % 12)}`} stroke="#b5b5b5" strokeWidth="1" />
    ))}
    {Array.from({ length: 11 }, (_, i) => (
      <path key={i} d={`M38 ${36 + i * 3}h${12 + ((i * 5) % 10)}`} stroke="#d0d0d0" strokeWidth="1" />
    ))}
    <text x="37" y="80" textAnchor="middle" fontFamily="Inter, sans-serif" fontSize="10" fontWeight="500" fill="#777">CSV</text>
  </svg>
);

const Minimised = () => (
  <svg width="86" height="78" viewBox="0 0 86 78">
    <rect y="12" width="86" height="50" fill="#f0eef2" />
    <rect y="12" width="86" height="3.500" fill="#dcdce6" />
    <rect x="42" y="16" width="44" height="46" fill="#e8e4f3" />
    <ellipse cx="57" cy="26" rx="7" ry="7.500" fill="#b79be6" />
    <rect x="66" y="30" width="18" height="13" rx="2" fill="#d9c4f0" transform="rotate(-8 75 37)" />
    <rect x="50" y="38" width="14" height="12" rx="2" fill="#c9bdf0" />
    <rect x="60" y="44" width="22" height="10" rx="2" fill="#a79ae0" transform="rotate(-8 71 50)" />
    <rect x="42" y="43" width="3" height="7" fill="#e39a4c" />
    <rect x="8" y="31" width="15" height="1.500" fill="#444" />
    <rect x="8" y="34" width="16" height="1.500" fill="#444" />
    <rect x="8" y="37" width="19" height="1" fill="#999" />
    <rect x="8" y="41" width="19" height="3.500" fill="#4a52bd" />
    <rect x="57" y="51" width="27" height="27" rx="6" fill="#fff" />
    <g transform="translate(60.500 54.500)">
      <TeamsGlyph size={20} />
    </g>
  </svg>
);

const Trash = () => (
  <svg width="66" height="86" viewBox="0 0 66 86" transform="translate(0 -7)">
    <ellipse cx="33" cy="12" rx="32" ry="8" fill="#c9cac8" />
    <path d="M10 13l8-9 6 4 5-7 7 6 5-5 6 8 6 4-8 5H16z" fill="#efefee" />
    <path d="M14 15l6-9 5 9zM36 15l4-10 6 9z" fill="#4a4d50" />
    <path d="M23 12l6-4 3 6z" fill="#5fbf7a" />
    <path d="M44 16l4-6 4 6z" fill="#4b8fc4" />
    <path d="M1 12l6 66q1 8 12 8h28q11 0 12-8l6-66q-6 8-32 8T1 12z" fill="#e1e1df" />
    <path d="M12 22l5 56M54 22l-5 56" stroke="#efefed" strokeWidth="5" opacity="0.7" />
    <path d="M24 24l10 8M40 40l-10 12M26 62l14 8" stroke="#d5d5d3" strokeWidth="3" opacity="0.6" />
  </svg>
);

/* ---------- data ---------- */

const menus: [string, number, number][] = [
  ["File", 43, 0], ["Edit", 46, 0], ["View", 57, -0.2], ["History", 86, -0.14], ["Bookmarks", 135, -0.23],
  ["Profiles", 89, -0.33], ["Tab", 42, -0.3], ["Window", 95, -0.6], ["Help", 58, 0],
];

const tabs: [string, string][] = [
  ["outlook", "Mail - B"], ["cc", "Coding"], ["teams", "Chat | S"], ["github", "Upload"], ["m365", "Excel | I"],
  ["excel", "DAILY S"], ["hr", "Concate"], ["openai", "Jira Pro"], ["snow", "ut04974"], ["snowtile", "Calling"],
  ["chrome", "New Ta"], ["youtube", "link two"], ["chrome", "New Ta"],
];

const navs: [string, number, number][] = [
  ["Your work", 130, -0.52], ["Projects", 108, -0.1], ["Filters", 81, -0.15], ["Dashboards", 157, -0.31],
  ["Teams", 85, -0.53], ["Plans", 71, -0.3], ["Apps", 67, -0.39],
];

type Side = { label: string; chevron?: "down" | "right"; nested?: boolean; badge?: string; on?: boolean; top?: number };
const side: Side[] = [
  { label: "Details" }, { label: "Access" }, { label: "Notifications", chevron: "down" },
  { label: "Settings", nested: true }, { label: "Issue email audit", nested: true, badge: "NEW" },
  { label: "Automation", on: true }, { label: "Issue types", top: 4 }, { label: "Features", top: 4 },
  { label: "Board", chevron: "right" }, { label: "Toolchain" }, { label: "Apps", chevron: "right" },
];

const dockApps: [React.ComponentType, boolean][] = [
  [Finder, true], [Launchpad, false], [Messages, false], [Mail, false], [Maps, false], [Photos, false], [FaceTime, false],
  [Calendar, false], [Safari, false], [ChromeIcon, true], [Contacts, false], [Reminders, false], [Notes, true],
  [Freeform, false], [TvIcon, false], [Music, false], [AppStore, false], [SettingsIcon, true],
];

const Required = ({ children }: { children: React.ReactNode }) => (
  <FieldLabel>
    {children}
    <LabelStar>*</LabelStar>
    <RequiredHint>(required)</RequiredHint>
  </FieldLabel>
);

/* ---------- page ---------- */

export default function App() {
  return (
    <>
      <Global />
      <Desktop>
        <MenuBar>
          <AppleSlot>
            <FaApple size={32} />
          </AppleSlot>
          <MenuItem $w={100} $bold>Chrome</MenuItem>
          {menus.map(([t, w, ls]) => (
            <MenuItem key={t} $w={w} $ls={ls}>{t}</MenuItem>
          ))}
          <StatusArea>
            <StatusSlot $w={70}>
              <svg width="34" height="34" viewBox="0 0 34 34">
                <path d="M1 1h32v24q0 3-3 4l-13 4-13-4q-3-1-3-4z" fill="#262522" />
                <path d="M23.500 7H14q-4 0-4 4t4 4h6q4 0 4 4t-4 4h-9.500" fill="none" stroke="#eae9e3" strokeWidth="3.600" />
              </svg>
            </StatusSlot>
            <StatusSlot $w={89}>
              <svg width="54" height="26" viewBox="0 0 54 26">
                <rect x="1.200" y="1.200" width="45" height="23" rx="7" fill="none" stroke="#8d8c87" strokeWidth="2" />
                <rect x="4.500" y="4.500" width="38.500" height="16.500" rx="4" fill="#262522" />
                <path d="M49 8.500q3.500 4 0 8z" fill="#8d8c87" />
                <path d="M27 0L14 14h8l-3 12 14-15h-8z" fill="#262522" stroke="#e8e7e0" strokeWidth="2" />
              </svg>
            </StatusSlot>
            <StatusSlot $w={74}>
              <svg width="34" height="26" viewBox="0 0 34 26" fill="none" stroke="#262522">
                <path d="M1.800 9.500a21.500 21.500 0 0 1 30.400 0" strokeWidth="4.600" />
                <path d="M7.500 15.700a13.500 13.500 0 0 1 19 0" strokeWidth="4.600" />
                <path d="M17 25.500l-5-5.500q5-4 10 0z" fill="#262522" stroke="none" />
              </svg>
            </StatusSlot>
            <StatusSlot $w={65}>
              <svg width="27" height="27" viewBox="0 0 27 27" fill="none" stroke="#262522" strokeLinecap="round">
                <circle cx="11" cy="11" r="9.500" strokeWidth="2.600" />
                <path d="M18 18l6.500 6.500" strokeWidth="3.400" />
              </svg>
            </StatusSlot>
            <StatusSlot $w={63}>
              <svg width="28" height="28" viewBox="0 0 28 28">
                <rect x="1.300" y="1.300" width="25.400" height="10.400" rx="5.200" fill="none" stroke="#262522" strokeWidth="2.400" />
                <circle cx="7" cy="6.500" r="3.400" fill="#262522" />
                <rect y="15" width="28" height="12.800" rx="6.400" fill="#262522" />
                <circle cx="21.300" cy="21.400" r="4" fill="#eae9e3" />
              </svg>
            </StatusSlot>
            <Clock>
              <span>Sat Jul 27</span>
              <span>10:54 AM</span>
            </Clock>
          </StatusArea>
        </MenuBar>

        <BrowserWindow>
          <TabStrip>
            <Lights>
              <Light $c="#ed6a5e" $edge="#d65b50" />
              <Light $c="#f5bf4f" $edge="#dba83f" />
              <Light $c="#62c554" $edge="#53ad45" />
            </Lights>
            {tabs.map(([icon, title], i) => (
              <Tab key={i}>
                <FavSlot>
                  <Favicon kind={icon} />
                </FavSlot>
                <TabTitle>{title}</TabTitle>
              </Tab>
            ))}
            <ActiveTab>
              <JiraMark size={32} shaded />
              <TabTitle $w={36}>Rule</TabTitle>
              <CloseSlot>
                <svg width="16" height="16" viewBox="0 0 16 16" stroke="#1d1b20" strokeWidth="3">
                  <path d="M1 1l14 14M15 1L1 15" />
                </svg>
              </CloseSlot>
            </ActiveTab>
            <NewTab>
              <svg width="20" height="20" viewBox="0 0 20 20" stroke="#4a4458" strokeWidth="2.800">
                <path d="M10 0v20M0 10h20" />
              </svg>
            </NewTab>
            <TabSearch>
              <Chevron color="#1d1b20" stroke={3.2} />
            </TabSearch>
          </TabStrip>

          <AddressBar>
            <NavButton>
              <svg width="26" height="24" viewBox="0 0 26 24" fill="none" stroke="#4a4458" strokeWidth="3">
                <path d="M13 1.500L2.500 12 13 22.500M2.500 12H26" />
              </svg>
            </NavButton>
            <NavButton>
              <svg width="26" height="24" viewBox="0 0 26 24" fill="none" stroke="#aaa5b0" strokeWidth="3">
                <path d="M13 1.500L23.500 12 13 22.500M23.500 12H0" />
              </svg>
            </NavButton>
            <NavButton>
              <svg width="26" height="26" viewBox="0 0 26 26" fill="none" stroke="#4a4458" strokeWidth="3">
                <path d="M22.500 7.500A10.500 10.500 0 1 0 23.500 14.500" />
                <path d="M24.500 1v9.500H15" />
              </svg>
            </NavButton>
            <Omnibox>
              <SiteInfo>
                <svg width="26" height="24" viewBox="0 0 26 24" fill="none" stroke="#1d1b20" strokeWidth="3">
                  <circle cx="6" cy="5.500" r="3.600" />
                  <path d="M13 5.500h12M1 18.500h12" />
                  <circle cx="20" cy="18.500" r="3.600" />
                </svg>
              </SiteInfo>
              <UrlHost>bharathipalani1403.atlassian.net</UrlHost>
              <UrlPath>/jira/software/projects/PRO1/settings/automation#/rule/20739838</UrlPath>
              <svg width="33" height="32" viewBox="0 0 33 32" fill="none" stroke="#49454f" strokeWidth="3">
                <path d="M16.500 3.500l4 9 9.500.8-7.200 6.300 2.200 9.400-8.500-5-8.500 5 2.200-9.400L3 13.300l9.500-.8z" />
              </svg>
            </Omnibox>
            <ProfileSlot>
              <Avatar $size={40} $font={21} $bg="#b02c5b" $weight={400}>B</Avatar>
            </ProfileSlot>
            <UpdatePill>
              Finish update
              <svg width="8" height="30" viewBox="0 0 8 30" fill="#22005d">
                <circle cx="4" cy="4" r="3" />
                <circle cx="4" cy="15" r="3" />
                <circle cx="4" cy="26" r="3" />
              </svg>
            </UpdatePill>
          </AddressBar>

          <JiraHeader>
            <svg width="33" height="33" viewBox="0 0 33 33" fill={subtle}>
              {[0, 1, 2].flatMap((r) => [0, 1, 2].map((c) => <rect key={`${r}${c}`} x={c * 12} y={r * 12} width="8.600" height="8.600" rx="2.400" />))}
            </svg>
            <Brand>
              <JiraMark size={39} />
              <BrandName>Jira</BrandName>
            </Brand>
            {navs.map(([t, w, ls]) => (
              <NavItem key={t} $on={t === "Projects"}>
                <NavLabel $w={w} $ls={ls}>{t}</NavLabel>
                <Chevron color={t === "Projects" ? blue : subtle} />
              </NavItem>
            ))}
            <Button $w={136} $kind="primary">Create</Button>
            <TrialButton>
              <svg width="28" height="28" viewBox="0 0 28 28" fill="#6e5dc6">
                <path d="M11 2q2.500 9.500 11.500 12Q13.500 16.500 11 26 8.500 16.500 0 14 8.500 11.500 11 2z" />
                <path d="M21.500 0q1.200 4.300 5.500 5.500-4.300 1.200-5.500 5.500-1.200-4.300-5.500-5.500 4.300-1.200 5.500-5.500zM20.500 17q1.200 4.100 5 5.300-3.800 1.200-5 5.300-1.200-4.100-5-5.300 3.800-1.200 5-5.300z" />
              </svg>
              29 days left
            </TrialButton>
            <SearchBox>
              <svg width="26" height="26" viewBox="0 0 26 26" fill="none" stroke={muted} strokeWidth="3" strokeLinecap="round">
                <circle cx="11" cy="11" r="8.800" />
                <path d="M17.500 17.500l6 6" />
              </svg>
              Search
            </SearchBox>
            <HeaderIcon>
              <svg width="34" height="34" viewBox="0 0 34 34" fill={subtle}>
                <path d="M1.500 14.500q-1.500 1.200 0 2.500l16 15q1.500 1 2.300-.7l10-14q3.200-4.800 2.200-13.800.8-1.500-.4-2.400-1.200-.9-2.400.2Q19-.5 13.500 4z" />
                <path d="M5 21q-2 5 1 7.500 2 1.500 4.500 1L9 27q-2 .5-2-4z" />
              </svg>
            </HeaderIcon>
            <HeaderIcon>
              <svg width="40" height="40" viewBox="0 0 40 40">
                <circle cx="20" cy="20" r="20" fill={subtle} />
                <path d="M14 15.500q0-6 6-6t6 5.500q0 3-3.500 5-2.500 1.500-2.500 4.500" fill="none" stroke="#fff" strokeWidth="4" strokeLinecap="round" />
                <circle cx="20" cy="31.500" r="2.500" fill="#fff" />
              </svg>
            </HeaderIcon>
            <HeaderIcon>
              <svg width="36" height="36" viewBox="0 0 36 36">
                <g fill={subtle}>
                  {[22.5, 67.5, 112.5, 157.5, 202.5, 247.5, 292.5, 337.5].map((a) => (
                    <path key={a} d="M14.800 1.500q0-1.500 1.500-1.500h3.400q1.500 0 1.500 1.500L23 7h-10z" transform={`rotate(${a} 18 18)`} />
                  ))}
                </g>
                <circle cx="18" cy="18" r="12.500" fill="none" stroke={subtle} strokeWidth="4" />
                <circle cx="18" cy="18" r="10.500" fill="#fff" />
              </svg>
            </HeaderIcon>
            <AccountSlot>
              <Avatar $size={48} $font={20}>B</Avatar>
            </AccountSlot>
          </JiraHeader>

          <Body>
            <Sidebar>
              <ProjectHead>
                <Koala size={48} />
                <ProjectNames>
                  <ProjectName>Project A11</ProjectName>
                  <ProjectKind>Software project</ProjectKind>
                </ProjectNames>
              </ProjectHead>
              <BackLink>
                <svg width="41" height="41" viewBox="0 0 40 40">
                  <circle cx="20" cy="20" r="20" fill={subtle} />
                  <path d="M18.500 13L12 20l6.500 7M12.500 20H29" fill="none" stroke="#fff" strokeWidth="4" strokeLinecap="round" strokeLinejoin="round" />
                </svg>
                Back to project
              </BackLink>
              <SideList>
                {side.map((s) => (
                  <SideItem key={s.label} $on={s.on} $top={s.top}>
                    <SideLead $w={s.nested ? 68 : 48}>
                      {s.on && <ActiveMark />}
                      {s.chevron && (
                        <ChevronSlot>
                          <Chevron dir={s.chevron} />
                        </ChevronSlot>
                      )}
                    </SideLead>
                    {s.label}
                    {s.badge && <NewBadge>{s.badge}</NewBadge>}
                  </SideItem>
                ))}
              </SideList>
            </Sidebar>

            <Main>
              <Crumbs>
                <span>Projects</span>
                <span>/</span>
                <span>Project A11</span>
                <span>/</span>
                <span>Project settings</span>
                <span>/</span>
                <span>Automation</span>
              </Crumbs>
              <TitleRow>
                <Title>myrule</Title>
                <Enabled>ENABLED</Enabled>
                <Toggle>
                  <svg width="20" height="16" viewBox="0 0 20 16" fill="none" stroke="#fff" strokeWidth="3.600" strokeLinecap="round" strokeLinejoin="round">
                    <path d="M2 8.500l5 5L18 2" />
                  </svg>
                  <Knob />
                </Toggle>
                <Actions>
                  <Button $w={167}>Audit log</Button>
                  <Button $w={202} $kind="selected">Rule details</Button>
                  <Button $w={144} $kind="primary">Update</Button>
                  <Divider />
                  <Button $w={242}>Return to rules</Button>
                </Actions>
              </TitleRow>
              <Workspace>
                <Flow>
                  <RuleCard $h={214}>
                    <StepIcon $bg="#dffcf0">
                      <Transition color="#4b9e70" />
                    </StepIcon>
                    <StepText>
                      <StepTitle>When: Issue transitioned</StepTitle>
                      <StepKey>FROM</StepKey>
                      <StepValue>In Progress</StepValue>
                      <StepKey>TO</StepKey>
                      <StepValue>Done</StepValue>
                    </StepText>
                  </RuleCard>
                  <Connector />
                  <RuleCard $h={144}>
                    <StepIcon $bg="#e9f1fe">
                      <Transition color="#3d7ff7" />
                    </StepIcon>
                    <StepText>
                      <StepTitle>Then: Transition the issue to</StepTitle>
                      <DarkTag>COPY FROM TRIGGER ISSUE</DarkTag>
                    </StepText>
                  </RuleCard>
                  <Connector />
                  <AddButton>
                    <svg width="37" height="37" viewBox="0 0 37 37" stroke={ink} strokeWidth="4" strokeLinecap="round">
                      <path d="M18.500 2.500v32M2.500 18.500h32" />
                    </svg>
                    Add component
                  </AddButton>
                </Flow>

                <Panel>
                  <PanelTitle>Rule details</PanelTitle>
                  <PanelNote>
                    Required fields are marked with an asterisk<Star>*</Star>
                  </PanelNote>
                  <Required>Name</Required>
                  <NameInput>
                    <Misspelt>myrule</Misspelt>
                    <Caret />
                  </NameInput>
                  <FieldLabel>Description</FieldLabel>
                  <TextArea>Add a description to your rule</TextArea>
                  <FieldLabel>Scope</FieldLabel>
                  <ScopeRow>
                    <Koala size={52} />
                    Project A11
                  </ScopeRow>
                  <Helper>
                    Scope can only be modified in the <Link>global administration</Link>.
                  </Helper>
                  <Required>Owner</Required>
                  <Select>
                    <Avatar $size={32} $font={13}>B</Avatar>
                    <SelectValue>Bharathi</SelectValue>
                    <Chevron />
                  </Select>
                  <Helper $ls={-0.12}>The owner will receive emails when the rule fails.</Helper>
                  <Required>Actor</Required>
                  <Select>
                    <Avatar $size={32} $font={13}>AJ</Avatar>
                    <SelectValue>Automation for Jira</SelectValue>
                    <Chevron />
                  </Select>
                  <Helper>Actions defined in this rule will be performed by the user</Helper>
                </Panel>
              </Workspace>
            </Main>
          </Body>
        </BrowserWindow>

        <DockArea>
          <Dock>
            {dockApps.map(([Icon, running], i) => (
              <DockItem key={i} $running={running}>
                <Icon />
              </DockItem>
            ))}
            <DockRule />
            <DockItem $running><TeamsIcon /></DockItem>
            <DockItem $running><Dictionary /></DockItem>
            <DockItem $running><Preview /></DockItem>
            <DockRule />
            <DockItem $w={66} $shift={6}><CsvFile /></DockItem>
            <DockItem $w={86} $shift={-4}><Minimised /></DockItem>
            <DockItem $w={66}><Trash /></DockItem>
          </Dock>
        </DockArea>
      </Desktop>
    </>
  );
}
